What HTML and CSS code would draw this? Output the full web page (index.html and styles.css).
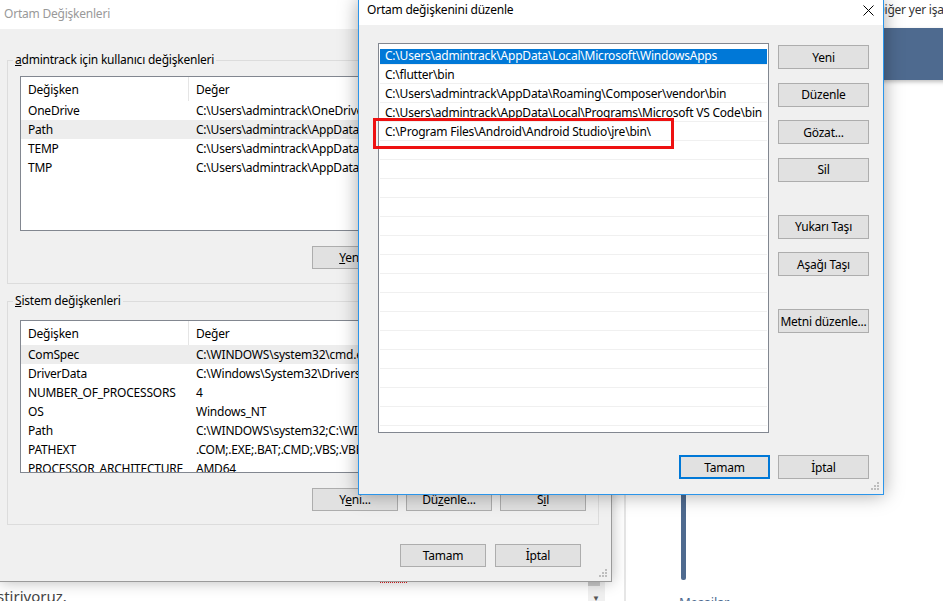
FILE: index.html
```html
<!DOCTYPE html>
<html lang="tr">
<head>
    <meta charset="UTF-8">
    <meta name="viewport" content="width=device-width, initial-scale=1.0">
    <title>Ortam değişkenini düzenle</title>
    <link rel="stylesheet" href="styles.css">
</head>
<body>
    <!-- arkadaki tarayıcı sayfası -->
    <div class="web">
        <div class="web-bookmarks">Diğer yer işaretleri</div>
        <div class="web-band"></div>
        <div class="web-rule"></div>
        <div class="web-accent"></div>
        <div class="web-scroll"><span class="web-scroll-thumb"></span><span class="web-scroll-arrow">&#9660;</span></div>
        <div class="web-spell"></div>
        <div class="web-text">stiriyoruz.</div>
        <div class="web-link">Mesajlar</div>
    </div>

    <!-- Ortam Değişkenleri (pasif pencere) -->
    <div class="window env-window">
        <div class="titlebar inactive">Ortam Değişkenleri</div>
        <div class="env-body">
            <fieldset class="group">
                <legend><u>a</u>dmintrack için kullanıcı değişkenleri</legend>
                <div class="var-list">
                    <div class="var-head"><span class="col-name">Değişken</span><span class="col-value">Değer</span></div>
                    <div class="var-row"><span class="col-name">OneDrive</span><span class="col-value">C:\Users\admintrack\OneDrive</span></div>
                    <div class="var-row current"><span class="col-name">Path</span><span class="col-value">C:\Users\admintrack\AppData\Local\Microsoft\WindowsApps;</span></div>
                    <div class="var-row"><span class="col-name">TEMP</span><span class="col-value">C:\Users\admintrack\AppData\Local\Temp</span></div>
                    <div class="var-row"><span class="col-name">TMP</span><span class="col-value">C:\Users\admintrack\AppData\Local\Temp</span></div>
                </div>
                <div class="group-buttons">
                    <button class="btn"><u>Y</u>eni...</button>
                    <button class="btn"><u>D</u>üzenle...</button>
                    <button class="btn"><u>S</u>il</button>
                </div>
            </fieldset>

            <fieldset class="group sys-group">
                <legend><u>S</u>istem değişkenleri</legend>
                <div class="var-list sys-list">
                    <div class="var-head"><span class="col-name">Değişken</span><span class="col-value">Değer</span></div>
                    <div class="var-row current"><span class="col-name">ComSpec</span><span class="col-value">C:\WINDOWS\system32\cmd.exe</span></div>
                    <div class="var-row"><span class="col-name">DriverData</span><span class="col-value">C:\Windows\System32\Drivers\DriverData</span></div>
                    <div class="var-row"><span class="col-name">NUMBER_OF_PROCESSORS</span><span class="col-value">4</span></div>
                    <div class="var-row"><span class="col-name">OS</span><span class="col-value">Windows_NT</span></div>
                    <div class="var-row"><span class="col-name">Path</span><span class="col-value">C:\WINDOWS\system32;C:\WINDOWS;C:\WINDOWS\System32\Wbem</span></div>
                    <div class="var-row"><span class="col-name">PATHEXT</span><span class="col-value">.COM;.EXE;.BAT;.CMD;.VBS;.VBE;.JS;.JSE</span></div>
                    <div class="var-row"><span class="col-name">PROCESSOR_ARCHITECTURE</span><span class="col-value">AMD64</span></div>
                </div>
                <div class="group-buttons">
                    <button class="btn">Y<u>e</u>ni...</button>
                    <button class="btn">Dü<u>z</u>enle...</button>
                    <button class="btn">S<u>i</u>l</button>
                </div>
            </fieldset>

            <div class="dialog-buttons env-footer">
                <button class="btn">Tamam</button>
                <button class="btn">İptal</button>
            </div>
        </div>
        <svg class="grip" width="9" height="9" viewBox="0 0 9 9"><rect x="6" y="0" width="2" height="2"/><rect x="3" y="3" width="2" height="2"/><rect x="6" y="3" width="2" height="2"/><rect x="0" y="6" width="2" height="2"/><rect x="3" y="6" width="2" height="2"/><rect x="6" y="6" width="2" height="2"/></svg>
    </div>

    <!-- Ortam değişkenini düzenle (etkin pencere) -->
    <div class="window edit-window">
        <div class="titlebar">
            <span>Ortam değişkenini düzenle</span>
            <svg class="close" width="11" height="11" viewBox="0 0 11 11"><path d="M0.5 0.5L10.5 10.5M10.5 0.5L0.5 10.5" stroke="#000" stroke-width="1" fill="none"/></svg>
        </div>
        <div class="edit-body">
            <div class="edit-main">
                <div class="path-list">
                    <div class="path-row selected">C:\Users\admintrack\AppData\Local\Microsoft\WindowsApps</div>
                    <div class="path-row">C:\flutter\bin</div>
                    <div class="path-row">C:\Users\admintrack\AppData\Roaming\Composer\vendor\bin</div>
                    <div class="path-row">C:\Users\admintrack\AppData\Local\Programs\Microsoft VS Code\bin</div>
                    <div class="path-row">C:\Program Files\Android\Android Studio\jre\bin\</div>
                    <div class="path-row"></div>
                    <div class="path-row"></div>
                    <div class="path-row"></div>
                    <div class="path-row"></div>
                    <div class="path-row"></div>
                    <div class="path-row"></div>
                    <div class="path-row"></div>
                    <div class="path-row"></div>
                    <div class="path-row"></div>
                    <div class="path-row"></div>
                    <div class="path-row"></div>
                    <div class="path-row"></div>
                    <div class="path-row"></div>
                    <div class="path-row"></div>
                    <div class="path-row"></div>
                </div>
                <div class="side-buttons">
                    <button class="btn btn-side">Yeni</button>
                    <button class="btn btn-side">Düzenle</button>
                    <button class="btn btn-side">Gözat...</button>
                    <button class="btn btn-side">Sil</button>
                    <button class="btn btn-side spaced">Yukarı Taşı</button>
                    <button class="btn btn-side">Aşağı Taşı</button>
                    <button class="btn btn-side spaced">Metni düzenle...</button>
                </div>
            </div>
            <div class="dialog-buttons edit-footer">
                <button class="btn btn-side is-default">Tamam</button>
                <button class="btn btn-side">İptal</button>
            </div>
        </div>
        <div class="mark"></div>
        <svg class="grip" width="9" height="9" viewBox="0 0 9 9"><rect x="6" y="0" width="2" height="2"/><rect x="3" y="3" width="2" height="2"/><rect x="6" y="3" width="2" height="2"/><rect x="0" y="6" width="2" height="2"/><rect x="3" y="6" width="2" height="2"/><rect x="6" y="6" width="2" height="2"/></svg>
    </div>
</body>
</html>
```

FILE: styles.css
```css
* {
    box-sizing: border-box;
}
html, body {
    margin: 0;
}
body {
    position: relative;
    width: 943px;
    height: 601px;
    overflow: hidden;
    background: #fff;
    font-family: "Noto Sans", "Segoe UI", sans-serif;
    font-size: 12px;
    letter-spacing: -0.22px;
    color: #000;
}

/* arka plandaki web sayfası */
.web > div {
    position: absolute;
}
.web-bookmarks {
    left: 876px;
    top: 2px;
    line-height: 16px;
    color: #333;
    white-space: nowrap;
}
.web-band {
    left: 860px;
    top: 28px;
    width: 90px;
    height: 52px;
    background: #4e6a8f;
    box-shadow: 0 2px 4px rgba(0,0,0,0.25);
}
.web-rule {
    left: 624px;
    top: 0;
    width: 2px;
    height: 601px;
    background: #e6e6e6;
}
.web-accent {
    left: 681px;
    top: 470px;
    width: 5px;
    height: 110px;
    background: #4e6a8f;
    border-radius: 0 0 2px 2px;
}
.web-scroll {
    left: 588px;
    top: 560px;
    width: 17px;
    height: 50px;
    background: #f0f0f0;
}
.web-scroll-thumb {
    position: absolute;
    left: 0;
    top: 22px;
    width: 12px;
    height: 4px;
    background: #c8c8c8;
}
.web-scroll-arrow {
    position: absolute;
    left: 4px;
    top: 32px;
    font-size: 8px;
    color: #555;
}
.web-spell {
    left: 380px;
    top: 582px;
    width: 27px;
    border-top: 1px dotted #e02020;
}
.web-text {
    left: -3px;
    top: 586px;
    font-size: 15px;
    line-height: 20px;
    letter-spacing: 0;
    color: #444;
}
.web-link {
    left: 679px;
    top: 593px;
    font-size: 13px;
    color: #4e6a8f;
}

/* pencereler */
.window {
    position: absolute;
    background: #f0f0f0;
}
.titlebar {
    background: #fff;
    white-space: nowrap;
}
.grip {
    position: absolute;
    right: 3px;
    bottom: 3px;
    fill: #bdbdbd;
}
.btn {
    width: 86px;
    height: 23px;
    padding: 0;
    margin: 0;
    background: #e1e1e1;
    border: 1px solid #adadad;
    font-family: inherit;
    font-size: 12px;
    letter-spacing: inherit;
    color: #000;
    white-space: nowrap;
}

/* Ortam Değişkenleri */
.env-window {
    left: 0;
    top: 0;
    width: 612px;
    height: 582px;
    border-right: 1px solid #9a9a9a;
    border-bottom: 1px solid #9a9a9a;
    box-shadow: 0 0 14px rgba(0,0,0,0.28);
}
.titlebar.inactive {
    height: 29px;
    line-height: 28px;
    padding-left: 4px;
    color: #999;
}
.env-body {
    padding: 23px 12px 0 7px;
}
.group {
    margin: 0;
    padding: 0 12px 14px 12px;
    border: 1px solid #dcdcdc;
    min-width: 0;
}
.group legend {
    padding: 0 2px;
    margin-left: -7px;
    line-height: 16px;
}
.sys-group {
    margin-top: 9px;
    padding-bottom: 13px;
}
.var-list {
    margin-top: 8px;
    height: 155px;
    background: #fff;
    border: 1px solid #828790;
    overflow: hidden;
}
.sys-list {
    margin-top: 11px;
    height: 153px;
}
.var-head,
.var-row {
    display: flex;
    white-space: nowrap;
}
.var-head {
    height: 24px;
    line-height: 26px;
}
.var-row {
    height: 19px;
    line-height: 20px;
}
.var-row.current {
    background: #ededed;
}
.col-name {
    flex: 0 0 168px;
    padding-left: 7px;
}
.var-head .col-name {
    border-right: 1px solid #e5e5e5;
}
.col-value {
    padding-left: 7px;
}
.group-buttons {
    display: flex;
    justify-content: flex-end;
    gap: 8px;
    margin-top: 15px;
}
.dialog-buttons {
    display: flex;
    justify-content: flex-end;
}
.env-footer {
    gap: 9px;
    margin-top: 19px;
    padding-right: 18px;
}

/* Ortam değişkenini düzenle */
.edit-window {
    left: 358px;
    top: -1px;
    width: 526px;
    height: 496px;
    border: 1px solid #2b95ea;
    box-shadow: 0 0 18px rgba(0,0,0,0.35);
}
.edit-window .titlebar {
    display: flex;
    justify-content: space-between;
    height: 25px;
    padding-left: 8px;
    line-height: 20px;
}
.close {
    margin: 5px 9px 0 0;
}
.edit-body {
    padding: 18px 14px 0 19px;
}
.edit-main {
    display: flex;
    gap: 9px;
}
.path-list {
    width: 391px;
    height: 390px;
    padding: 2px 1px 0;
    background: #fff;
    border: 1px solid #828790;
    overflow: hidden;
}
.path-row {
    height: 19px;
    padding: 1px 0 0 5px;
    line-height: 18px;
    border-bottom: 1px solid #f0f0f0;
    white-space: nowrap;
    overflow: hidden;
}
.path-row.selected {
    color: #fff;
    background: linear-gradient(#fff 0 3px, #0078d7 3px);
}
.side-buttons {
    display: flex;
    flex-direction: column;
    padding-top: 2px;
}
.btn-side {
    width: 91px;
    height: 24px;
}
.btn-side + .btn-side {
    margin-top: 13.5px;
}
.btn-side.spaced {
    margin-top: 33px;
}
.edit-footer {
    gap: 8px;
    margin-top: 22px;
}
.edit-footer .btn-side {
    margin-top: 0;
}
.btn.is-default {
    border: 2px solid #0078d7;
}
.mark {
    position: absolute;
    left: 14px;
    top: 118px;
    width: 301px;
    height: 31px;
    border: 3px solid #ee1111;
}
```
